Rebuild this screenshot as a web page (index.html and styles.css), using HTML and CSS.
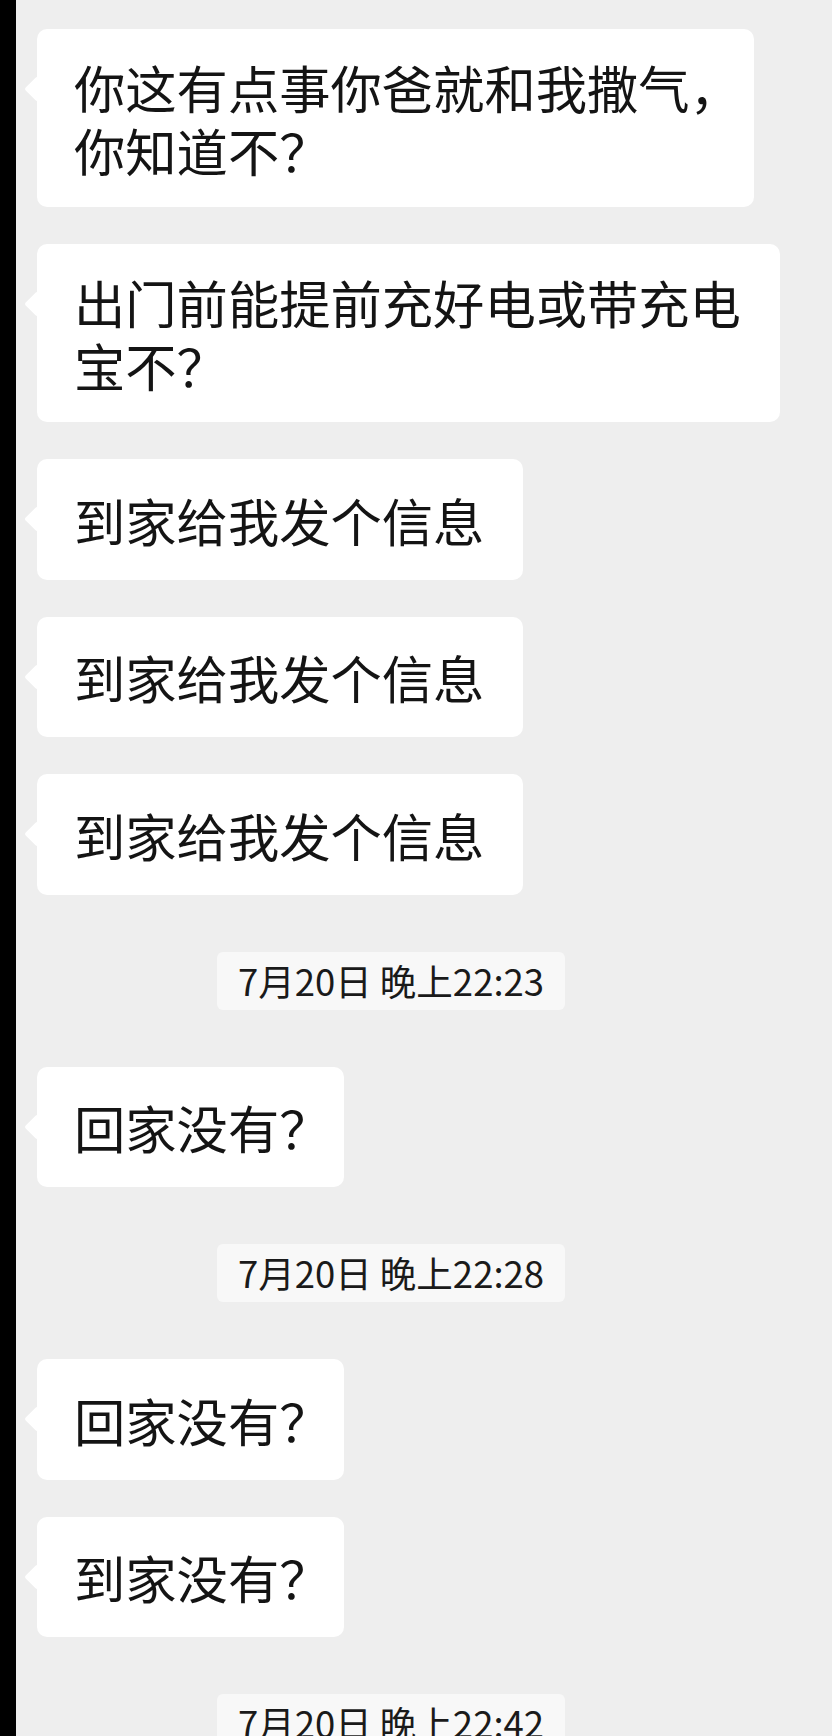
FILE: index.html
```html
<!DOCTYPE html>
<html lang="zh-CN">
<head>
  <meta charset="UTF-8">
  <meta name="viewport" content="width=device-width, initial-scale=1.0">
  <title>聊天记录</title>
  <link rel="stylesheet" href="styles.css">
</head>
<body>
  <div class="screen">
    <div class="chat">
      <div class="msg">你这有点事你爸就和我撒气，<br>你知道不？</div>
      <div class="msg">出门前能提前充好电或带充电<br>宝不？</div>
      <div class="msg">到家给我发个信息</div>
      <div class="msg">到家给我发个信息</div>
      <div class="msg">到家给我发个信息</div>

      <div class="time"><span>7月20日 晚上22:23</span></div>

      <div class="msg">回家没有？</div>

      <div class="time"><span>7月20日 晚上22:28</span></div>

      <div class="msg">回家没有？</div>
      <div class="msg">到家没有？</div>

      <div class="time"><span>7月20日 晚上22:42</span></div>
    </div>
  </div>
</body>
</html>
```

FILE: styles.css
```css
body {
  margin: 0;
  padding: 0;
  background-color: #eeeeee;
  font-family: "Noto Sans CJK SC", "Noto Sans", sans-serif;
  color: #141414;
}
.screen {
  height: 100vh;
  box-sizing: border-box;
  border-left: 16px solid #000;
  overflow: hidden;
}
.chat {
  display: flex;
  flex-direction: column;
  align-items: flex-start;
  gap: 37px;
  padding: 29px 0 0 21px;
}
.msg {
  position: relative;
  display: flex;
  align-items: center;
  box-sizing: border-box;
  max-width: 760px;
  min-height: 120.5px;
  padding: 26px 39px 26px 37px;
  background: #fff;
  border-radius: 10px;
  font-size: 51.3px;
  line-height: 63px;
  font-feature-settings: "halt";
}
.msg::before {
  content: "";
  position: absolute;
  left: -9px;
  top: 51px;
  width: 18px;
  height: 18px;
  background: #fff;
  border-radius: 2px;
  transform: rotate(45deg);
}
.time {
  align-self: stretch;
  display: flex;
  justify-content: center;
  padding-right: 87px;
  margin: 20px 0;
}
.time span {
  height: 58px;
  padding: 0 21px;
  line-height: 58px;
  font-size: 36.5px;
  background: #f8f8f8;
  border-radius: 6px;
  color: #1a1a1a;
}
```
